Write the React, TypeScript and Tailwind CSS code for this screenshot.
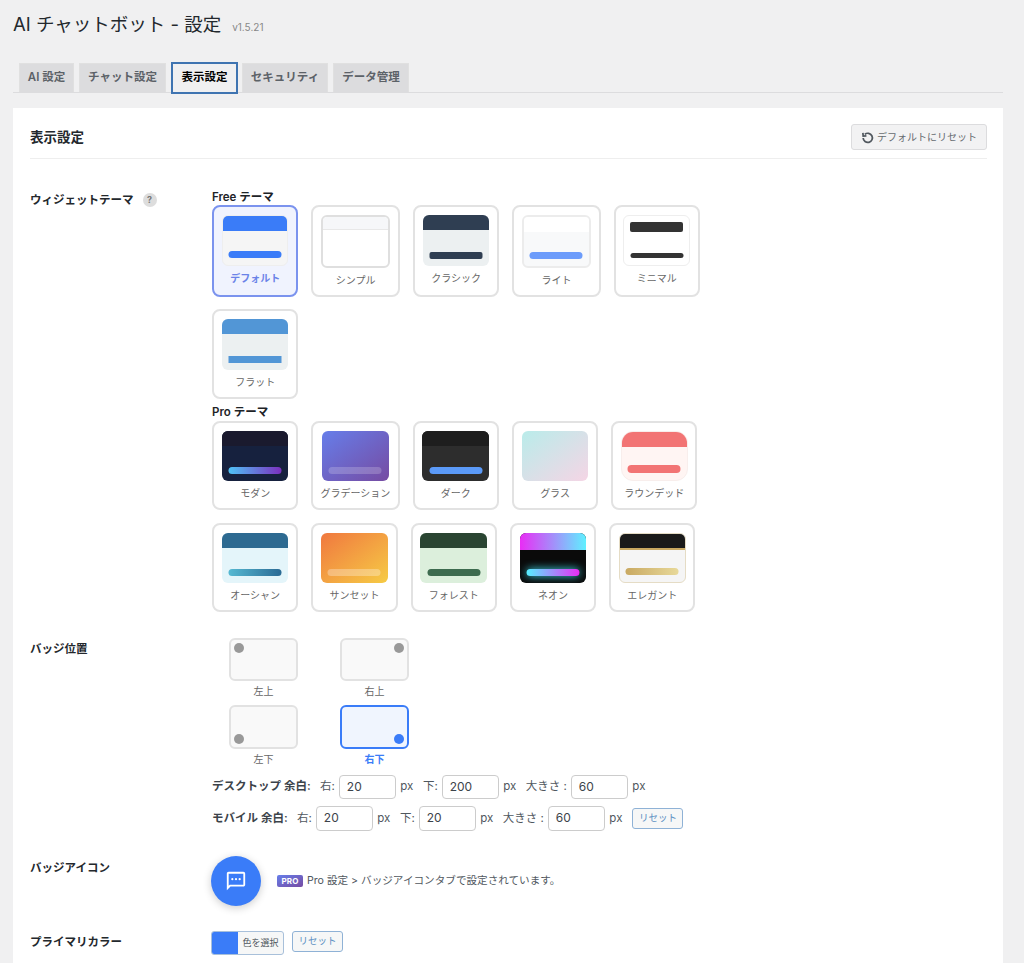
import clsx from "clsx";

interface Theme {
  label: string;
  card?: string;
  active?: boolean;
  preview: string;
  header?: string;
  bar?: string;
}

const BAR = "absolute left-1/2 -translate-x-1/2 bottom-[7px] w-[53px] h-[7px]";

const FREE_THEMES: Theme[] = [
  {
    label: "デフォルト",
    active: true,
    preview: "w-[66.5px] h-[50.5px] rounded-md bg-[#f5f5f5] border border-[#eeeeee]",
    header: "h-[15px] bg-[#3a7cf8]",
    bar: "rounded-full bg-[#3a7cf8]",
  },
  {
    label: "シンプル",
    card: "w-[88.7px]",
    preview: "w-[69px] h-[52.7px] rounded-md bg-white border-2 border-[#dfdfdf]",
    header: "h-[13px] bg-[#f6f7f9] border-b border-[#e8e8e8]",
  },
  {
    label: "クラシック",
    preview: "w-[66.5px] h-[50.5px] rounded-md bg-[#ecf0f1]",
    header: "h-[15px] bg-[#2f3e52]",
    bar: "rounded-[2px] bg-[#2f3e52]",
  },
  {
    label: "ライト",
    card: "w-[88.3px]",
    preview: "w-[68.3px] h-[52.7px] rounded-md bg-[#f8f9fa] border-2 border-[#ececec]",
    header: "h-[15px] bg-white",
    bar: "rounded-full bg-[#6c9cfb]",
  },
  {
    label: "ミニマル",
    preview: "w-[66.5px] h-[50.5px] rounded-md bg-white border border-[#eeeeee]",
    header: "mx-auto mt-[6px] w-[53px] h-[10px] rounded-[2px] bg-[#333333]",
    bar: "!h-[5px] rounded-full bg-[#333333]",
  },
  {
    label: "フラット",
    preview: "w-[66.5px] h-[50.5px] rounded-md bg-[#ecf0f1]",
    header: "h-[15px] bg-[#5296d6]",
    bar: "bg-[#5296d6]",
  },
];

const PRO_THEMES: Theme[] = [
  {
    label: "モダン",
    preview: "w-[66.5px] h-[50px] rounded-md bg-[#16213e]",
    header: "h-[15px] bg-[#1a1a2e]",
    bar: "rounded-full bg-linear-to-r/srgb from-[#4fc3f7] to-[#7b2fbe]",
  },
  {
    label: "グラデーション",
    card: "w-[88.3px]",
    preview: "w-[66.5px] h-[50px] rounded-md bg-linear-to-br/srgb from-[#667eea] to-[#764ba2]",
    bar: "rounded-full bg-white/20",
  },
  {
    label: "ダーク",
    preview: "w-[66.5px] h-[50px] rounded-md bg-[#2d2d2d]",
    header: "h-[15px] bg-[#1e1e1e]",
    bar: "rounded-full bg-[#5b9af8]",
  },
  {
    label: "グラス",
    preview: "w-[66.5px] h-[50px] rounded-md bg-linear-to-br/srgb from-[#b9ecea] to-[#f5d5e5]",
  },
  {
    label: "ラウンデッド",
    preview: "w-[66.5px] h-[50px] rounded-xl bg-[#fff5f3] border border-[#f8eeec]",
    header: "h-[15px] bg-[#f27474]",
    bar: "!h-[8px] rounded-full bg-[#f27474]",
  },
  {
    label: "オーシャン",
    preview: "w-[66.5px] h-[50px] rounded-md bg-[#e4f5fa]",
    header: "h-[15px] bg-[#2d6a91]",
    bar: "rounded-full bg-linear-to-r/srgb from-[#56b9d2] to-[#2a6a94]",
  },
  {
    label: "サンセット",
    preview: "w-[66.5px] h-[50px] rounded-md bg-linear-to-br/srgb from-[#f0783f] to-[#f6cb45]",
    bar: "rounded-full bg-white/30",
  },
  {
    label: "フォレスト",
    preview: "w-[66.5px] h-[50px] rounded-md bg-[#dcefdc]",
    header: "h-[15px] bg-[#2a4532]",
    bar: "rounded-full bg-[#3d6b4f]",
  },
  {
    label: "ネオン",
    preview: "w-[66.5px] h-[50px] rounded-md bg-[#0a0a0a]",
    header: "h-[17px] bg-linear-to-r/srgb from-[#e92cf5] to-[#5ff0ff]",
    bar: "rounded-full bg-linear-to-r/srgb from-[#55f0ff] to-[#e92cf5] shadow-[0_0_8px_#3fe0f0]",
  },
  {
    label: "エレガント",
    preview: "w-[66.5px] h-[50px] rounded-md bg-[#f5f5f5] border border-[#e5dcc5]",
    header: "h-[16px] bg-[#1a1a1a] border-b-2 border-[#c9a962]",
    bar: "rounded-full bg-linear-to-r/srgb from-[#c9a962] to-[#e8d99a]",
  },
];

const TABS = [
  { label: "AI 設定", w: "w-[55px]" },
  { label: "チャット設定", w: "w-[87px]" },
  { label: "表示設定", w: "w-[67px]", active: true },
  { label: "セキュリティ", w: "w-[86px] -ml-px" },
  { label: "データ管理", w: "w-[76px]" },
];

const ThemeCard = ({ theme }: { theme: Theme }) => (
  <div
    className={clsx(
      "rounded-lg border-2 pt-2 pb-2 flex flex-col items-center",
      theme.card ?? "w-[86.3px]",
      theme.active ? "border-[#7b93ee] bg-[#f0f3fe]" : "border-[#e2e2e2] bg-white"
    )}
  >
    <div className={clsx("relative overflow-hidden shrink-0", theme.preview)}>
      {theme.header && <div className={theme.header} />}
      {theme.bar && <div className={clsx(BAR, theme.bar)} />}
    </div>
    <span
      className={clsx(
        "mt-[5px] text-[10px] leading-[14px] whitespace-nowrap",
        theme.active ? "text-[#6a82e8] font-semibold" : "text-[#666666]"
      )}
    >
      {theme.label}
    </span>
  </div>
);

const PositionCard = ({ label, dot, active }: { label: string; dot: string; active?: boolean }) => (
  <div className="flex flex-col items-center">
    <div
      className={clsx(
        "relative w-[68.7px] h-[43.7px] rounded-md border-2",
        active ? "border-[#3a7cf8] bg-[#f0f5fe]" : "border-[#e2e2e2] bg-[#f9f9f9]"
      )}
    >
      <span className={clsx("absolute w-[10px] h-[10px] rounded-full", dot, active ? "bg-[#3a7cf8]" : "bg-[#999999]")} />
    </div>
    <span className={clsx("mt-[3px] text-[10px] leading-[14px]", active ? "font-semibold text-[#3a7cf8]" : "text-[#666666]")}>
      {label}
    </span>
  </div>
);

const MarginField = ({ label, value, className }: { label: string; value: string; className?: string }) => (
  <div className={clsx("flex items-center text-[11.5px] text-[#50575e]", className)}>
    <span className="whitespace-nowrap">{label}</span>
    <div className="ml-[4px] w-[57.5px] h-[24.5px] rounded-[4px] border border-[#cccccc] bg-white pl-[7px] text-[12px] leading-[22px] text-[#3c434a]">
      {value}
    </div>
    <span className="ml-[4px]">px</span>
  </div>
);

const SmallReset = ({ className }: { className?: string }) => (
  <div
    className={clsx(
      "w-[51px] h-[21px] rounded-[3px] border border-[#8fb2d6] bg-[#f6f7f7] flex items-center justify-center text-[9.5px] text-[#5b8fc2]",
      className
    )}
  >
    リセット
  </div>
);

export default function App() {
  return (
    <div className="h-[963px] overflow-hidden bg-[#f0f0f1] font-['Inter','Noto_Sans_CJK_JP',sans-serif] text-[#1d2327]">
      <div className="pl-[13px] pr-[21px]">
        <div className="h-[62px] flex items-baseline pt-[11px]">
          <h1 className="text-[18.5px] leading-[26px] font-normal text-[#23282d]">AI チャットボット - 設定</h1>
          <span className="ml-[11px] text-[10px] text-[#888888]">v1.5.21</span>
        </div>

        <div className="flex h-[31px] pl-[6px] gap-[5px] border-b border-[#dcdcde] items-end">
          {TABS.map((tab) => (
            <div
              key={tab.label}
              className={clsx(
                "flex items-center justify-center text-[11.5px] font-semibold whitespace-nowrap",
                tab.w,
                tab.active
                  ? "h-[32px] -mb-[2px] border-2 border-[#3f74b1] bg-[#f0f0f1] text-black"
                  : "h-[29px] border border-b-0 border-[#e0e0e0] bg-[#dcdcde] text-[#5c6268]"
              )}
            >
              {tab.label}
            </div>
          ))}
        </div>

        <div className="mt-[15px] bg-white pl-[17px] pr-[16px] pt-[16px] h-[900px]">
          <div className="flex items-start justify-between pb-[8px] border-b border-[#eeeeee]">
            <h2 className="text-[13.5px] leading-[26px] font-semibold text-[#23282d]">表示設定</h2>
            <div className="w-[136px] h-[26px] rounded-[3px] border border-[#dcdcde] bg-[#f2f2f3] flex items-center justify-center gap-[3px] text-[10px] text-[#666b70]">
              <svg viewBox="0 0 24 24" fill="none" className="w-[13px] h-[13px] stroke-[#50575e]" strokeWidth="3.2">
                <path d="M7 6.2A8.5 8.5 0 1 1 4 13" />
                <path d="M3.5 3.5 4 9.5l6-.6" />
              </svg>
              デフォルトにリセット
            </div>
          </div>

          <div className="flex pt-[29px]">
            <div className="w-[182px] shrink-0 pt-[3px] flex items-center text-[11.5px] leading-[18px] font-semibold self-start text-[#23282d]">
              ウィジェットテーマ
              <span className="ml-[9px] w-[14px] h-[14px] rounded-full bg-[#dddddd] flex items-center justify-center text-[9px] font-bold text-[#777777]">
                ?
              </span>
            </div>
            <div className="w-[520px]">
              <div className="pt-px text-[11.5px] leading-[16px] font-semibold">Free テーマ</div>
              <div className="flex flex-wrap gap-x-[13px] gap-y-[12.7px]">
                {FREE_THEMES.map((theme) => (
                  <ThemeCard key={theme.label} theme={theme} />
                ))}
              </div>
              <div className="mt-[5px] text-[11.5px] leading-[17px] font-semibold">Pro テーマ</div>
              <div className="flex flex-wrap gap-x-[13px] gap-y-[12.7px]">
                {PRO_THEMES.map((theme) => (
                  <ThemeCard key={theme.label} theme={theme} />
                ))}
              </div>
            </div>
          </div>

          <div className="flex pt-[26px]">
            <div className="w-[182px] shrink-0 pt-[2px] text-[11.5px] leading-[18px] font-semibold text-[#23282d]">バッジ位置</div>
            <div>
              <div className="grid grid-cols-[103px_103px] gap-x-[8px] gap-y-[6.7px]">
                <PositionCard label="左上" dot="left-[3px] top-[3px]" />
                <PositionCard label="右上" dot="right-[3px] top-[3px]" />
                <PositionCard label="左下" dot="left-[3px] bottom-[3px]" />
                <PositionCard label="右下" dot="right-[3px] bottom-[3px]" active />
              </div>
              <div className="mt-[9px] flex items-center">
                <span className="w-[108px] text-[11.5px] font-semibold text-[#3c434a] whitespace-nowrap">デスクトップ 余白:</span>
                <MarginField label="右:" value="20" />
                <MarginField label="下:" value="200" className="ml-[9.5px]" />
                <MarginField label="大きさ :" value="60" className="ml-[9.5px]" />
              </div>
              <div className="mt-[7px] flex items-center">
                <span className="w-[85px] text-[11.5px] font-semibold text-[#3c434a] whitespace-nowrap">モバイル 余白:</span>
                <MarginField label="右:" value="20" />
                <MarginField label="下:" value="20" className="ml-[9.5px]" />
                <MarginField label="大きさ :" value="60" className="ml-[9.5px]" />
                <SmallReset className="ml-[10px]" />
              </div>
            </div>
          </div>

          <div className="flex pt-[25px]">
            <div className="w-[181px] shrink-0 pt-[3px] text-[11.5px] leading-[18px] font-semibold text-[#23282d]">バッジアイコン</div>
            <div className="flex items-center">
              <div className="w-[50px] h-[50px] rounded-full bg-[#3a7cf8] shadow-[0_2px_8px_rgba(0,0,0,0.2)] flex items-center justify-center">
                <svg viewBox="0 0 24 24" className="w-[22px] h-[22px] fill-white">
                  <path d="M20 2H4c-1.1 0-2 .9-2 2v18l4-4h14c1.1 0 2-.9 2-2V4c0-1.1-.9-2-2-2zm0 14H5.17L4 17.17V4h16v12z" />
                  <circle cx="8" cy="10" r="1.2" />
                  <circle cx="12" cy="10" r="1.2" />
                  <circle cx="16" cy="10" r="1.2" />
                </svg>
              </div>
              <span className="ml-[16px] w-[26px] h-[12px] rounded-[2px] bg-linear-to-br/srgb from-[#667eea] to-[#764ba2] flex items-center justify-center text-[8px] font-bold tracking-wide text-white">
                PRO
              </span>
              <span className="ml-[4px] text-[10.6px] text-[#50575e]">Pro 設定 &gt; バッジアイコンタブで設定されています。</span>
            </div>
          </div>

          <div className="flex pt-[25px]">
            <div className="w-[181px] shrink-0 pt-[2px] text-[11.5px] leading-[18px] font-semibold text-[#23282d]">プライマリカラー</div>
            <div className="flex items-start">
              <div className="w-[73px] h-[24px] rounded-[3px] border border-[#a8c0da] bg-[#f6f7f7] flex overflow-hidden">
                <span className="w-[26px] bg-[#3a7cf8]" />
                <span className="flex-1 text-center text-[9px] leading-[22px] text-[#50575e]">色を選択</span>
              </div>
              <SmallReset className="ml-[8px]" />
            </div>
          </div>
        </div>
      </div>
    </div>
  );
}
